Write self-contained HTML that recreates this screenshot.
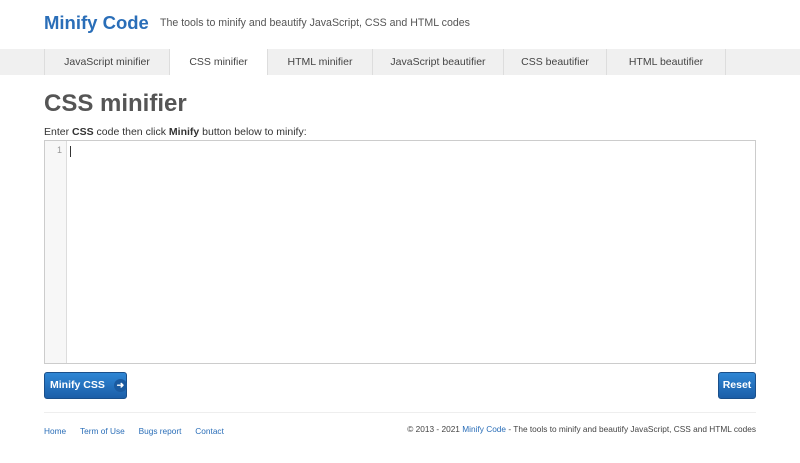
<!DOCTYPE html>
<html><head><style>
body{margin:0;background:#fff;font-family:"Liberation Sans",Arial,sans-serif;width:800px;height:463px;overflow:hidden;position:relative;color:#333}
.a{position:absolute}
.logo{left:44px;top:12px;font-size:18.5px;font-weight:bold;color:#2a6eb8}
.tag{left:160px;top:17px;font-size:10.6px;color:#555}
.nav{left:0;top:49px;width:800px;height:26px;background:#f0f0f0}
.tab{position:absolute;top:0;height:26px;line-height:26px;text-align:center;font-size:10.5px;color:#444;border-left:1px solid #ddd}
h1{position:absolute;left:44px;top:90px;margin:0;font-size:24px;color:#555}
.ins{left:44px;top:126px;font-size:10.5px;color:#333}
.ed{left:44px;top:140px;width:710px;height:222px;border:1px solid #ccc;background:#fff}
.gut{left:0;top:0;width:21px;height:222px;background:#f7f7f7;border-right:1px solid #ddd}
.btn{background:linear-gradient(#2f86d4,#1b5ea8);color:#fff;font-weight:bold;font-size:10.5px;border-radius:3px;border:1px solid #1a4f8a;height:25px;line-height:25px;white-space:nowrap}
.f{font-size:8.3px;top:426px;white-space:nowrap}
.f a{color:#2a6eb8;text-decoration:none}
</style></head><body>
<div class="a logo">Minify Code</div>
<div class="a tag">The tools to minify and beautify JavaScript, CSS and HTML codes</div>
<div class="a nav">
<div class="tab" style="left:44px;width:124px">JavaScript minifier</div>
<div class="tab" style="left:169px;width:97px;background:#fff">CSS minifier</div>
<div class="tab" style="left:267px;width:104px">HTML minifier</div>
<div class="tab" style="left:372px;width:130px">JavaScript beautifier</div>
<div class="tab" style="left:503px;width:102px">CSS beautifier</div>
<div class="tab" style="left:606px;width:118px">HTML beautifier</div>
<div class="tab" style="left:725px;width:0"></div>
</div>
<h1>CSS minifier</h1>
<div class="a ins">Enter <b>CSS</b> code then click <b>Minify</b> button below to minify:</div>
<div class="a ed"><div class="a gut"><div style="font-size:9px;color:#999;text-align:right;padding:4px 4px 0 0">1</div></div><div class="a" style="left:25px;top:5px;width:1px;height:11px;background:#333"></div></div>
<div class="a btn" style="left:44px;top:372px;width:81px"><span style="margin-left:5px">Minify CSS</span><span style="display:inline-block;margin-left:9px;width:13px;height:13px;border-radius:7px;background:#1a5aa0;text-align:center;line-height:13px;font-size:9px;vertical-align:middle">➜</span></div>
<div class="a btn" style="left:718px;top:372px;width:36px;text-align:center">Reset</div>
<div class="a" style="left:44px;top:412px;width:712px;height:1px;background:#eee"></div>
<div class="a f" style="left:44px"><a>Home</a>&nbsp;&nbsp;&nbsp;&nbsp;&nbsp;&nbsp;<a>Term of Use</a>&nbsp;&nbsp;&nbsp;&nbsp;&nbsp;&nbsp;<a>Bugs report</a>&nbsp;&nbsp;&nbsp;&nbsp;&nbsp;&nbsp;<a>Contact</a></div>
<div class="a f" style="right:44px;top:424px;color:#444">© 2013 - 2021 <a>Minify Code</a> - The tools to minify and beautify JavaScript, CSS and HTML codes</div>
</body></html>
